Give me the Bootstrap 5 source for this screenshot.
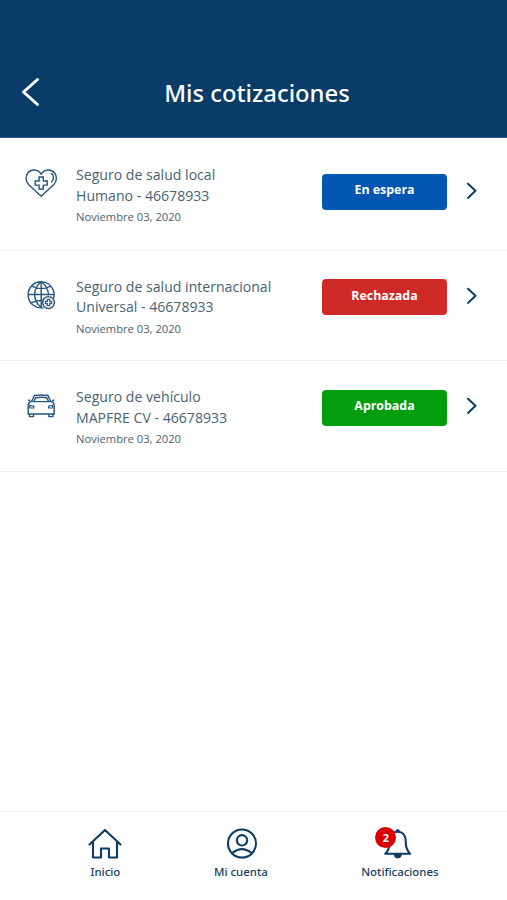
<!DOCTYPE html>
<html lang="es">
<head>
<meta charset="utf-8">
<meta name="viewport" content="width=device-width, initial-scale=1">
<title>Mis cotizaciones</title>
<link href="https://cdn.jsdelivr.net/npm/bootstrap@5.3.0/dist/css/bootstrap.min.css" rel="stylesheet">
<style>
body{font-family:"Open Sans","Noto Sans",sans-serif;background:#fff;height:900px;overflow:hidden}
svg{display:block;fill:none;stroke:#0a3d68;flex:none;overflow:visible}
.top-bar{height:138px;background:#093c67;padding:49px 19px 0 20px;border-bottom:1px solid #315c80;display:grid;grid-template-columns:20px 1fr 14px}
.top-bar svg{stroke:#fff;margin-top:-3px}
.top-bar h1{font:500 23.8px/32px "Noto Sans",sans-serif}
.quote{height:111px;border-bottom:1px solid #eeeff0;padding:26px 29px 0 25px}
.quote:first-child{height:113px;padding-top:27px}
.quote:nth-child(2){height:110px}
.quote-icon{width:51px}
.quote-icon svg{stroke:#285780;stroke-width:1.45}
.quote-text{color:#496373;font-size:14.1px;line-height:20.7px}
.quote:nth-child(2) .quote-text{margin-top:-.5px}
.quote-date{font-size:11.2px;line-height:22px}
.state{width:125px;height:35.500px;border-radius:4px;color:#fff;font-size:12.4px;font-weight:700;margin-top:2px;margin-right:19px;padding-bottom:2px}
.state-wait{background:#0056b0;margin-top:9px}
.state-no{background:#cf2a27;padding:0}
.state-ok{background:#039e0d;margin-top:3px;padding-bottom:3px}
.chev{margin-top:10px}
.quote:first-child .chev{margin-top:17px}
.bottom-bar{height:89px;border-top:1px solid #eeeff0;display:grid;grid-template-columns:136px 135px 183px;padding:16px 15px 0 37.4px}
.bottom-bar a{font:500 11.4px/16px "Noto Sans",sans-serif;color:#123f68;text-decoration:none}
.bottom-bar svg{stroke-width:2.1;margin-bottom:5px;margin-left:-1px}
.alerts{width:36px;margin-right:5px}
.count{left:-4px;top:-1px;width:21px;height:21px;background:#dc0000;color:#fff;font:700 11px/21px "Open Sans",sans-serif}
</style>
<script src="https://cdn.jsdelivr.net/npm/bootstrap@5.3.0/dist/js/bootstrap.bundle.min.js"></script>
</head>
<body class="d-flex flex-column">
<header class="top-bar align-items-center">
  <svg width="20" height="28" viewBox="0 0 20 28" stroke-width="3" stroke-linecap="round" stroke-linejoin="round"><path d="M17.500 1.500 3.500 14 17.500 26.500"/></svg>
  <h1 class="m-0 text-white text-center">Mis cotizaciones</h1>
</header>
<main class="flex-grow-1">
  <article class="quote d-flex align-items-start">
    <div class="quote-icon pt-1"><svg width="33" height="29" viewBox="0 0 33 29"><path d="M16.200 27.200 3.800 15.800C0 11.800.500 7 2.800 4 6.200-.200 13-.200 16.200 5.200 19.400-.200 26.200-.200 29.600 4c2.300 3 2.800 7.800-1 11.800z" stroke-linejoin="round"/><path d="M14.100 8h4.200v3.900h3.900v4.200h-3.900V20h-4.200v-3.900h-3.900v-4.200h3.900zM26 4.200c3.300 1.800 3.300 5.800.300 9.300"/></svg></div>
    <div class="quote-text flex-grow-1"><div>Seguro de salud local</div><div>Humano - 46678933</div><div class="quote-date">Noviembre 03, 2020</div></div>
    <div class="state state-wait d-flex align-items-center justify-content-center">En espera</div>
    <svg class="chev" width="12" height="18" viewBox="0 0 12 18" stroke-width="2" stroke-linecap="round" stroke-linejoin="round"><path d="m2 1.700 7.500 7.100L2 15.900"/></svg>
  </article>
  <article class="quote d-flex align-items-start">
    <div class="quote-icon pt-1"><svg width="33" height="29" viewBox="0 0 33 29"><path d="M18.500 26.600A13 13 0 1 1 28.700 17M16.200.500v26M3.200 13.500h26M6.500 5.200q9.700 4.500 19.500 0M6 21.800q5.500-2.500 12.500-2.300M16.200.500C7.500 8 7.500 19.500 16.200 26.500M16.200.500c5.200 4 7.300 8.500 7.300 14"/><circle cx="23.500" cy="21.500" r="5.900"/><path d="M22.300 18.400h2.400v1.900h1.900v2.400h-1.900v1.900h-2.400v-1.900h-1.900v-2.400h1.900z" stroke-width="1.200"/></svg></div>
    <div class="quote-text flex-grow-1"><div>Seguro de salud internacional</div><div>Universal - 46678933</div><div class="quote-date">Noviembre 03, 2020</div></div>
    <div class="state state-no d-flex align-items-center justify-content-center">Rechazada</div>
    <svg class="chev" width="12" height="18" viewBox="0 0 12 18" stroke-width="2" stroke-linecap="round" stroke-linejoin="round"><path d="m2 1.700 7.500 7.100L2 15.900"/></svg>
  </article>
  <article class="quote d-flex align-items-start">
    <div class="quote-icon pt-1"><svg width="33" height="29" viewBox="0 0 33 29"><path d="M6.500 10.800 9.500 4.500q6.700-1.200 13.400 0l3 6.300M8.800 10.500l2-3.800q5.400-.800 10.800 0l2 3.800M3.200 23v-8.700q0-2.700 2.600-3.700h20.800q2.600 1 2.600 3.700V23zM5.300 9.800l-2.200-.800M27.100 9.800l2.200-.800M4.500 23v2.600h4V23M23.900 23v2.600h4V23"/><path d="M4.800 14.300l4 .900v1.800h-4zM27.600 14.300l-4 .900v1.800h4z" stroke-width="1.200"/></svg></div>
    <div class="quote-text flex-grow-1"><div>Seguro de vehículo</div><div>MAPFRE CV - 46678933</div><div class="quote-date">Noviembre 03, 2020</div></div>
    <div class="state state-ok d-flex align-items-center justify-content-center">Aprobada</div>
    <svg class="chev" width="12" height="18" viewBox="0 0 12 18" stroke-width="2" stroke-linecap="round" stroke-linejoin="round"><path d="m2 1.700 7.500 7.100L2 15.900"/></svg>
  </article>
</main>
<nav class="bottom-bar">
  <a href="#" class="d-flex flex-column align-items-center"><svg width="34" height="31" viewBox="0 0 34 31" stroke-linecap="round" stroke-linejoin="round"><path d="M1.500 16.500 17 2l15.500 14.500M5 14v15.500h8v-9h8v9h8V14"/></svg>Inicio</a>
  <a href="#" class="d-flex flex-column align-items-center"><svg width="32" height="31" viewBox="0 0 32 31"><circle cx="18" cy="15.500" r="14"/><circle cx="18" cy="12.300" r="5.200"/><path d="M8 25.300q10-8.500 20 0"/></svg>Mi cuenta</a>
  <a href="#" class="d-flex flex-column align-items-center"><span class="alerts position-relative"><svg width="36" height="31" viewBox="0 0 36 31" stroke-linejoin="round"><path d="M7.200 25.700c3.500-3 4.500-6.500 4.500-12.200 0-6 2.500-9.700 8-9.700s8 3.700 8 9.700c0 5.700 1 9.200 4.500 12.200z"/><path d="M18 3.500q0-2 1.700-2t1.700 2zM16 26.500h7.500q-.5 3.500-3.700 3.500T16 26.500z" fill="#0a3d68" stroke-width="1"/></svg><span class="count position-absolute rounded-circle text-center">2</span></span>Notificaciones</a>
</nav>
</body>
</html>
